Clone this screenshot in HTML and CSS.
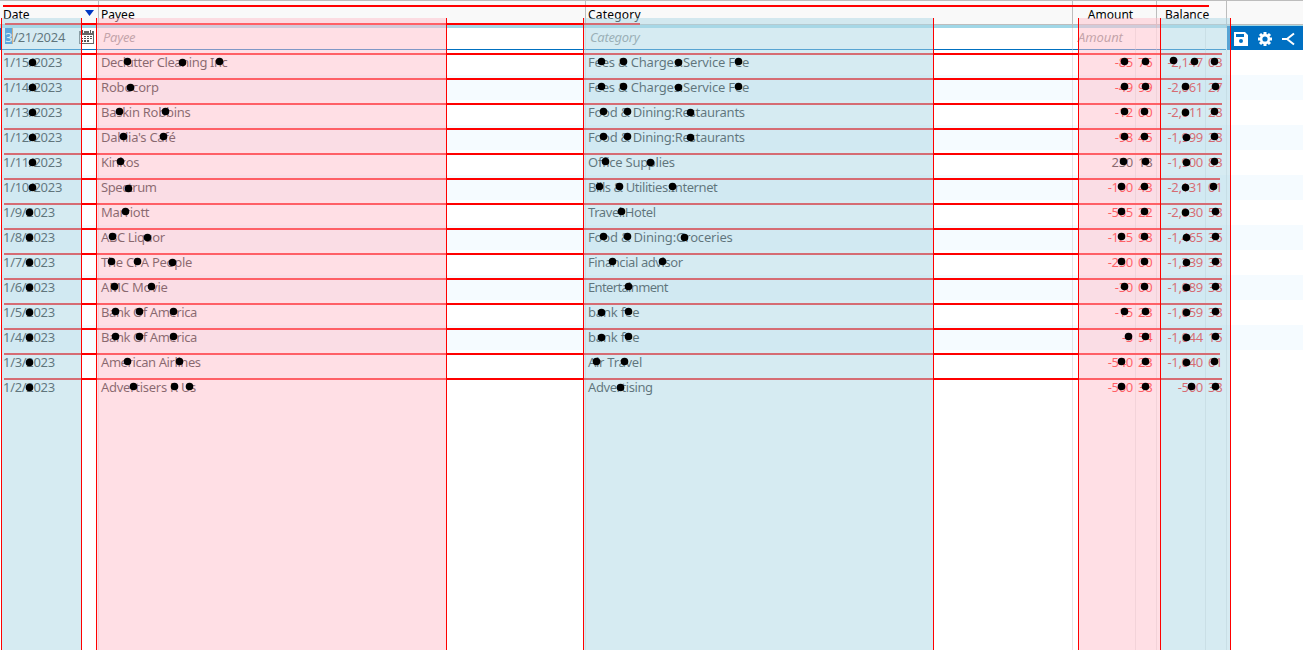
FILE: index.html
```html
<!DOCTYPE html>
<html lang="en">
<head>
<meta charset="utf-8">
<title>Register</title>
<link rel="stylesheet" href="styles.css">
</head>
<body>
<main class="register">
  <header class="row head">
    <div class="cell date"><span>Date</span><svg class="sort" width="9" height="6" viewBox="0 0 9 6"><path d="M0 0h9L4.500 6z" fill="#0037c3"/></svg></div>
    <div class="cell">Payee</div>
    <div class="cell category">Category</div>
    <div class="cell center">Amount</div>
    <div class="cell balance">Balance</div>
    <div></div>
  </header>
  <div class="band"></div>
  <div class="row entry">
    <div class="cell date"><span><mark>3</mark>/21/2024</span>
      <svg class="calendar" width="15" height="14" viewBox="0 0 15 14" shape-rendering="crispEdges"><path d="M0 1h15v13H0z" fill="#666"/><path d="M1 5h13v8H1z" fill="#fff"/><path d="M2 0h3v3H2zM10 0h3v3h-3z" fill="#fff"/><path d="M3 0h1v3H3zM11 0h1v3h-1z" fill="#555"/><path d="M5 6h2v1H5zM8 6h2v1H8zM11 6h2v1h-2zM2 8h2v1H2zM5 8h2v1H5zM8 8h2v1H8zM11 8h2v1h-2zM2 10h2v2H2zM5 10h2v2H5zM8 10h2v2H8z" fill="#555"/></svg></div>
    <div class="cell hint">Payee</div>
    <div class="cell hint">Category</div>
    <div class="cell hint amount-hint">Amount</div>
    <div class="cell"></div>
    <div class="tools">
      <svg width="14" height="14" viewBox="0 0 14 14"><path fill="#fff" fill-rule="evenodd" d="M0 0h11l3 3v11H0zM2 2v3h8V2zM7 7a2 2 0 1 0 0 4a2 2 0 1 0 0-4z"/></svg>
      <svg width="14" height="14" viewBox="0 0 14 14"><g stroke="#fff" fill="none"><circle cx="7" cy="7" r="3.900" stroke-width="2.600"/><path stroke-width="3" d="M7 0v2.500M7 11.500V14M0 7h2.500M11.500 7H14M2 2l1.800 1.800M10.200 10.200L12 12M12 2l-1.800 1.800M3.800 10.200L2 12"/></g></svg>
      <svg width="13" height="14" viewBox="0 0 13 14"><path d="M0 7h5L12 1.500M5 7l7 5.500" stroke="#fff" stroke-width="2" fill="none"/></svg>
    </div>
  </div>
  <section class="rows">
    <div class="row"><div class="cell">1/15/2023</div><div class="cell tight">Declutter Cleaning Inc</div><div class="cell loose">Fees &amp; Charges:Service Fee</div><div class="money neg"><b>-85</b><i>76</i></div><div class="money neg"><b>-2,147</b><i>03</i></div></div>
    <div class="row"><div class="cell">1/14/2023</div><div class="cell loose">Robocorp</div><div class="cell loose">Fees &amp; Charges:Service Fee</div><div class="money neg"><b>-49</b><i>99</i></div><div class="money neg"><b>-2,061</b><i>27</i></div></div>
    <div class="row"><div class="cell">1/13/2023</div><div class="cell">Baskin Robbins</div><div class="cell">Food &amp; Dining:Restaurants</div><div class="money neg"><b>-12</b><i>00</i></div><div class="money neg"><b>-2,011</b><i>28</i></div></div>
    <div class="row"><div class="cell">1/12/2023</div><div class="cell">Dahlia's Café</div><div class="cell">Food &amp; Dining:Restaurants</div><div class="money neg"><b>-98</b><i>45</i></div><div class="money neg"><b>-1,999</b><i>28</i></div></div>
    <div class="row"><div class="cell">1/11/2023</div><div class="cell tight">Kinkos</div><div class="cell">Office Supplies</div><div class="money"><b>230</b><i>18</i></div><div class="money neg"><b>-1,900</b><i>83</i></div></div>
    <div class="row"><div class="cell">1/10/2023</div><div class="cell tight">Spectrum</div><div class="cell tight">Bills &amp; Utilities:Internet</div><div class="money neg"><b>-100</b><i>43</i></div><div class="money neg"><b>-2,131</b><i>01</i></div></div>
    <div class="row"><div class="cell">1/9/2023</div><div class="cell">Marriott</div><div class="cell tight">Travel:Hotel</div><div class="money neg"><b>-565</b><i>22</i></div><div class="money neg"><b>-2,030</b><i>58</i></div></div>
    <div class="row"><div class="cell">1/8/2023</div><div class="cell tight">ABC Liquor</div><div class="cell loose">Food &amp; Dining:Groceries</div><div class="money neg"><b>-125</b><i>98</i></div><div class="money neg"><b>-1,465</b><i>36</i></div></div>
    <div class="row"><div class="cell">1/7/2023</div><div class="cell">The CPA People</div><div class="cell tight">Financial advisor</div><div class="money neg"><b>-250</b><i>00</i></div><div class="money neg"><b>-1,339</b><i>38</i></div></div>
    <div class="row"><div class="cell">1/6/2023</div><div class="cell loose">AMC Movie</div><div class="cell tighter">Entertainment</div><div class="money neg"><b>-30</b><i>00</i></div><div class="money neg"><b>-1,089</b><i>38</i></div></div>
    <div class="row"><div class="cell">1/5/2023</div><div class="cell tight">Bank Of America</div><div class="cell loose">bank fee</div><div class="money neg"><b>-15</b><i>23</i></div><div class="money neg"><b>-1,059</b><i>38</i></div></div>
    <div class="row"><div class="cell">1/4/2023</div><div class="cell tight">Bank Of America</div><div class="cell loose">bank fee</div><div class="money neg"><b>-3</b><i>54</i></div><div class="money neg"><b>-1,044</b><i>15</i></div></div>
    <div class="row"><div class="cell">1/3/2023</div><div class="cell tight">American Airlines</div><div class="cell">Air Travel</div><div class="money neg"><b>-540</b><i>23</i></div><div class="money neg"><b>-1,040</b><i>61</i></div></div>
    <div class="row"><div class="cell">1/2/2023</div><div class="cell">Advertisers R Us</div><div class="cell tight">Advertising</div><div class="money neg"><b>-500</b><i>38</i></div><div class="money neg"><b>-500</b><i>38</i></div></div>
  </section>
  <svg class="overlay" width="1303" height="650" viewBox="0 0 1303 650" shape-rendering="crispEdges">
    <!-- column rules -->
    <path d="M98.500 28V650M585.500 28V650M1072.500 28V650M1135.500 28V650M1156.500 28V650M1205.500 28V650M1226.500 50V650" stroke="#c8c8c8" stroke-opacity=".45"/>
    <!-- row separators -->
    <path d="M3 6H1209M5 24H640M4 54H1222M4 79H1222M4 104H1222M4 129H1222M4 154H1222M4 179H1220M4 204H1222M4 229H1222M4 254H1222M4 279H1222M4 304H1222M4 329H1222M4 354H1220M4 379H1222" stroke="#f00" stroke-width="2"/>
    <!-- column bands -->
    <path d="M1 18H82V650H1zM583 18H934V650H583zM1160 18H1231V650H1160z" fill="#add8e6" fill-opacity=".5"/>
    <path d="M96 18H447V650H96zM1078 18H1161V650H1078z" fill="#ffc0cb" fill-opacity=".5"/>
    <path d="M1.500 18V650M81.500 18V650M96.500 18V650M446.500 18V650M583.500 18V650M933.500 18V650M1078.500 18V650M1160.500 18V650M1230.500 18V650" stroke="#f00"/>
    <!-- word centres -->
    <g fill="none" stroke="#000" stroke-width="7.600" stroke-linecap="round" shape-rendering="geometricPrecision">
      <path d="M32.500 62.500h.01M32.500 87.500h.01M32.500 112.500h.01M32.500 137.500h.01M32.500 162.500h.01M32.500 187.500h.01M29.500 212.500h.01M29.500 237.500h.01M29.500 262.500h.01M29.500 287.500h.01M29.500 312.500h.01M29.500 337.500h.01M29.500 362.500h.01M29.500 387.500h.01"/>
      <path d="M127.500 61.500h.01M182.500 62.500h.01M219.500 61.500h.01M130.500 87.500h.01M119.500 111.500h.01M165.500 111.500h.01M123.500 136.500h.01M163.500 136.500h.01M120.500 161.500h.01M128.500 188.500h.01M125.500 211.500h.01M112.500 236.500h.01M147.500 237.500h.01M111.500 261.500h.01M137.500 261.500h.01M172.500 262.500h.01M114.500 286.500h.01M151.500 286.500h.01M115.500 311.500h.01M139.500 311.500h.01M173.500 311.500h.01M115.500 336.500h.01M139.500 336.500h.01M173.500 336.500h.01M127.500 361.500h.01M179.500 361.500h.01M133.500 386.500h.01M174.500 386.500h.01M189.500 386.500h.01"/>
      <path d="M601.500 61.500h.01M623.500 61.500h.01M678.500 62.500h.01M738.500 61.500h.01M601.500 86.500h.01M623.500 86.500h.01M678.500 87.500h.01M738.500 86.500h.01M603.500 111.500h.01M627.500 111.500h.01M690.500 112.500h.01M603.500 136.500h.01M627.500 136.500h.01M690.500 137.500h.01M605.500 161.500h.01M650.500 162.500h.01M599.500 186.500h.01M619.500 186.500h.01M672.500 186.500h.01M621.500 211.500h.01M603.500 236.500h.01M627.500 236.500h.01M684.500 237.500h.01M612.500 261.500h.01M662.500 261.500h.01M628.500 286.500h.01M601.500 312.500h.01M628.500 311.500h.01M601.500 337.500h.01M628.500 336.500h.01M596.500 361.500h.01M624.500 361.500h.01M620.500 387.500h.01"/>
      <path d="M1124.500 61.500h.01M1145.500 61.500h.01M1124.500 86.500h.01M1145.500 86.500h.01M1124.500 111.500h.01M1144.500 111.500h.01M1124.500 136.500h.01M1144.500 136.500h.01M1123.500 161.500h.01M1145.500 161.500h.01M1121.500 186.500h.01M1144.500 186.500h.01M1121.500 211.500h.01M1144.500 211.500h.01M1121.500 236.500h.01M1144.500 236.500h.01M1121.500 261.500h.01M1144.500 261.500h.01M1124.500 286.500h.01M1144.500 286.500h.01M1124.500 311.500h.01M1145.500 311.500h.01M1128.500 336.500h.01M1145.500 336.500h.01M1121.500 361.500h.01M1145.500 361.500h.01M1121.500 386.500h.01M1145.500 386.500h.01"/>
      <path d="M1173.500 60.500h.01M1194.500 61.500h.01M1214.500 61.500h.01M1185.500 86.500h.01M1215.500 86.500h.01M1185.500 112.500h.01M1214.500 111.500h.01M1186.500 137.500h.01M1214.500 136.500h.01M1186.500 162.500h.01M1214.500 161.500h.01M1185.500 187.500h.01M1213.500 186.500h.01M1185.500 212.500h.01M1215.500 211.500h.01M1186.500 237.500h.01M1215.500 236.500h.01M1186.500 262.500h.01M1215.500 261.500h.01M1186.500 287.500h.01M1215.500 286.500h.01M1186.500 312.500h.01M1215.500 311.500h.01M1186.500 337.500h.01M1215.500 336.500h.01M1186.500 362.500h.01M1214.500 361.500h.01M1191.500 386.500h.01M1215.500 386.500h.01"/>
    </g>
  </svg>
</main>
</body>
</html>
```
FILE: styles.css
```css
* { box-sizing: border-box; }
body { margin: 0; background: #fff; overflow: hidden; }
.register {
  position: relative;
  width: 1303px;
  height: 650px;
  border-top: 1px solid #bdbdbd;
  font: 13px/25px "Noto Sans", "Open Sans", sans-serif;
  letter-spacing: -0.3px;
  color: #111;
}
.row {
  display: grid;
  grid-template-columns: 98px 487px 487px 84px 70px 77px;
  height: 25px;
}
.cell { padding-left: 3px; white-space: nowrap; }
.rows .cell:nth-child(n+2) { letter-spacing: -0.27px; }
.rows .cell.loose { letter-spacing: -0.18px; }
.rows .cell.tight { letter-spacing: -0.42px; }
.rows .cell.tighter { letter-spacing: -0.65px; }
.head {
  height: 24px;
  background: #f9f9f9;
  border-bottom: 1px solid #bdbdbd;
  color: #000;
  line-height: 27px;
  font-size: 12px;
  letter-spacing: 0;
}
.head .category { letter-spacing: 0.2px; }
.head .cell + * { border-left: 1px solid #bdbdbd; padding-left: 2px; }
.head .date { display: flex; justify-content: space-between; padding-right: 4px; }
.sort { margin-top: 9px; }
.head .center { text-align: center; padding: 0 8px 0 0; }
.head .balance { padding-left: 8px !important; }
.band { height: 3px; background: #a0d7e7; }
.entry { height: 22px; line-height: 19px; }
.entry .cell { border-bottom: 1px solid #0070c0; }
.entry .date { display: flex; justify-content: space-between; padding: 0 4px 0 3px; border-left: 2px solid #0070c0; }
.entry mark { display: inline-block; height: 16px; line-height: 19px; background: #0c75d2; color: #fff; border-right: 1px solid #e48a32; }
.calendar { margin-top: 2px; }
.entry .hint { padding-left: 5px; color: #888; font-style: italic; line-height: 18px; }
.entry .amount-hint { padding-left: 6px; letter-spacing: -0.1px; }
.tools {
  display: flex;
  gap: 10px;
  align-items: center;
  padding: 1px 0 0 7px;
  height: 24px;
  margin: -2px 0 0 1px;
  background: #0070c2;
}
.rows .row:nth-child(even):not(:last-child) { background: #f5fbff; }
.money { display: grid; grid-template-columns: 1fr 18px; column-gap: 5px; }
.money b, .money i { font: inherit; }
.money b { text-align: right; }
.neg { color: #f00; }
.overlay { position: absolute; left: 0; top: -1px; }
```
